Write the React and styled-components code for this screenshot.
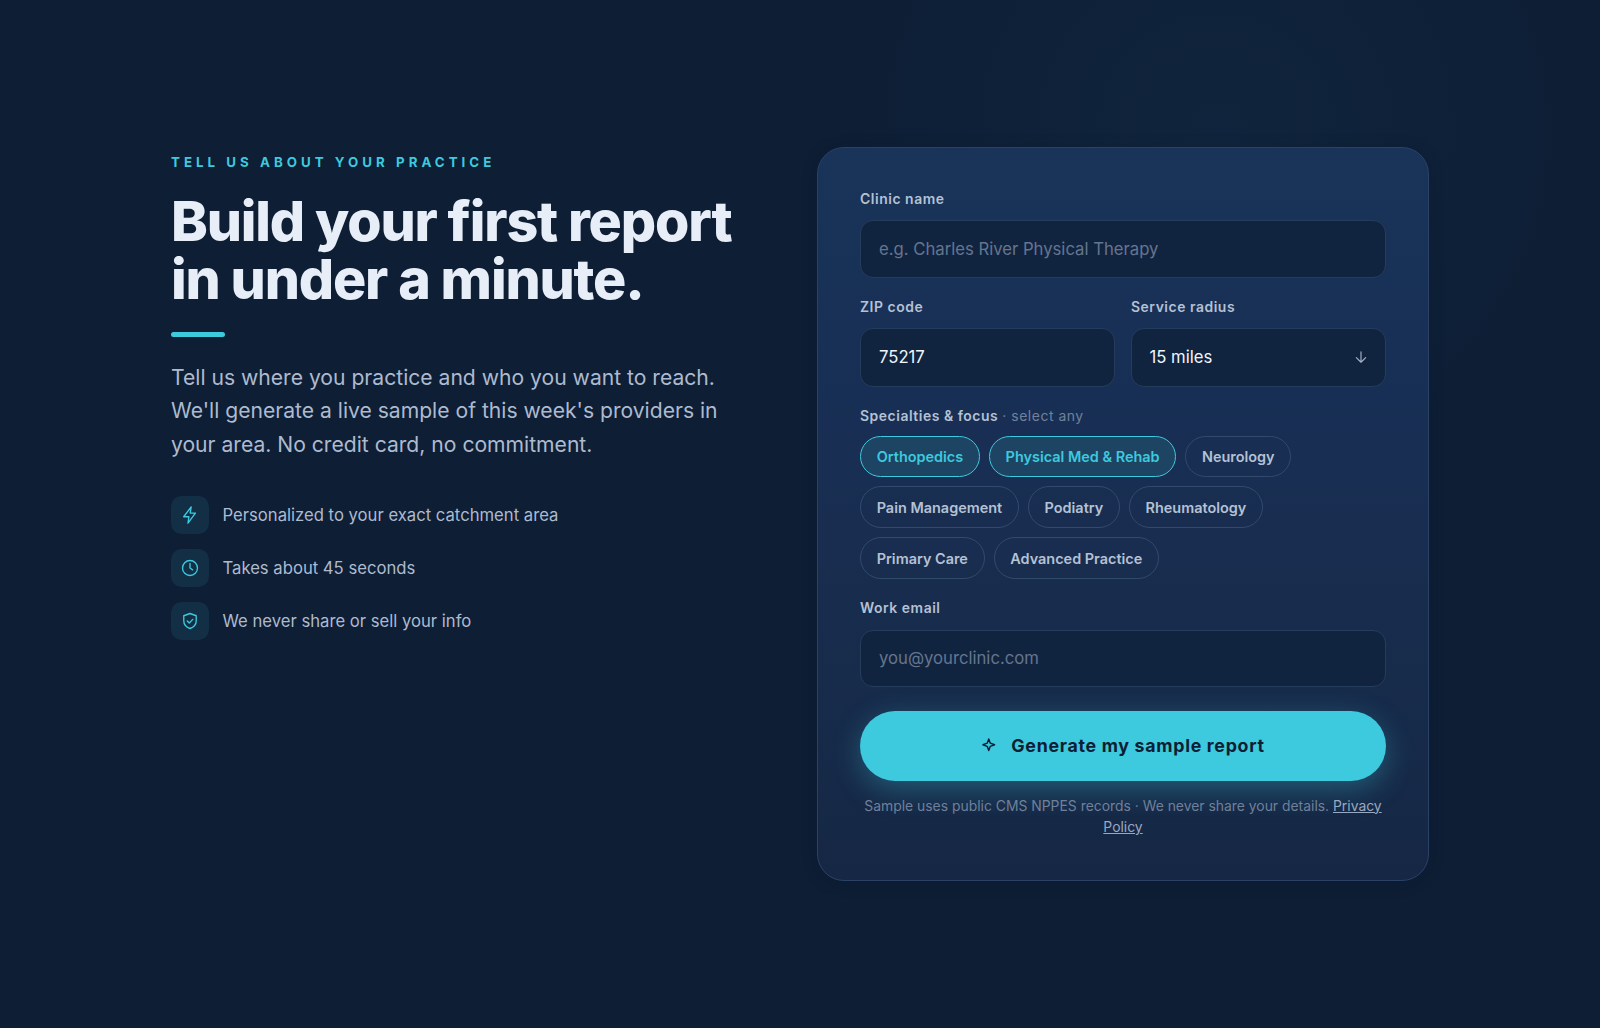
import React from "react";
import styled, { createGlobalStyle } from "styled-components";

const GlobalStyle = createGlobalStyle`
* {
    box-sizing: border-box;
}
body {
    margin: 0;
    background: #0d1e35;
    color: #e8eef8;
    font-family: Inter, "Liberation Sans", sans-serif;
    -webkit-font-smoothing: antialiased;
}
`;

const Section = styled.section`
display: flex;
justify-content: center;
align-items: flex-start;
min-height: 1028px;
padding-top: 147px;
background: radial-gradient(circle at 1217px 130px, rgba(70, 175, 222, 0.042), rgba(61, 190, 222, 0) 370px), #0d1e35;
`;

const Container = styled.div`
display: grid;
grid-template-columns: 582px 612px;
justify-content: space-between;
width: 1258px;
`;

const Intro = styled.div`
padding-top: 7px;
`;

const Eyebrow = styled.div`
color: #3dc9de;
font-size: 13.3px;
font-weight: 700;
line-height: 17px;
letter-spacing: 4.03px;
text-transform: uppercase;
`;

const Title = styled.h1`
margin: 21px 0 0;
font-size: 55.5px;
font-weight: 800;
line-height: 58px;
letter-spacing: -1.18px;
white-space: nowrap;
`;

const Accent = styled.div`
width: 53.5px;
height: 5px;
margin-top: 24px;
border-radius: 3px;
background: #3dc9de;
`;

const Lead = styled.p`
margin: 23.5px 0 0;
color: #aebace;
font-size: 21.12px;
line-height: 33.8px;
white-space: nowrap;
`;

const Features = styled.ul`
display: flex;
flex-direction: column;
gap: 15.5px;
list-style: none;
margin: 34.1px 0 0;
padding: 0;
`;

const Feature = styled.li`
display: flex;
align-items: center;
gap: 14px;
color: #aebace;
font-size: 16.66px;
`;

const FeatureIcon = styled.span`
display: flex;
align-items: center;
justify-content: center;
width: 37.5px;
height: 37.7px;
border-radius: 10.5px;
background: #122f45;
color: #3dc9de;
`;

const Card = styled.form`
display: flex;
flex-direction: column;
height: 734px;
padding: 42px;
border: 1px solid #2a4265;
border-radius: 27px;
background: linear-gradient(180deg, #193359 0%, #182f55 35%, #182d4e 60%, #152744 100%);
box-shadow: 0 2px 20px -4px rgba(4, 12, 28, 0.2);
`;

const Field = styled.div`
display: flex;
flex-direction: column;
margin-bottom: 20.3px;
`;

const FieldRow = styled.div`
display: grid;
grid-template-columns: 1fr 1fr;
gap: 16px;
`;

const Label = styled.label`
margin-bottom: ${props => props.$gap || "10.8px"};
color: #b5c1d4;
font-size: 13.9px;
font-weight: 600;
line-height: 19.5px;
letter-spacing: 0.55px;
`;

const Hint = styled.span`
color: #71819b;
font-weight: 400;
`;

const Input = styled.input`
width: 100%;
height: ${props => props.$height || "57.4px"};
padding: 0 18px;
border: 1px solid #263c5b;
border-radius: 13px;
outline: none;
background: #11243f;
color: #f0f5fc;
font-family: inherit;
font-size: 16.68px;
&::placeholder {
    color: #65758f;
    opacity: 1;
}
`;

const Select = styled.button`
display: flex;
align-items: center;
justify-content: space-between;
width: 100%;
height: 58.3px;
padding: 0 17px 0 17.5px;
border: 1px solid #263c5b;
border-radius: 13px;
background: #11243f;
color: #f0f5fc;
font-family: inherit;
font-size: 16.68px;
svg {
    color: #a3b1c7;
}
`;

const Chips = styled.div`
display: flex;
flex-wrap: wrap;
gap: 9px;
`;

const Chip = styled.button`
height: 41.8px;
padding: 0 15.7px;
border: 1px solid ${props => (props.$active ? "#3dc9de" : "#324a6c")};
border-radius: 21px;
background: ${props => (props.$active ? "#1d4563" : "transparent")};
color: ${props => (props.$active ? "#3dc9de" : "#b5c1d4")};
font-family: inherit;
font-size: 14.45px;
font-weight: 600;
`;

const Submit = styled.button`
display: flex;
align-items: center;
justify-content: center;
gap: 14.5px;
flex: none;
height: 69.3px;
margin-top: 4px;
border: 0;
border-radius: 35px;
background: #3dc9de;
box-shadow: 0 8px 30px rgba(61, 201, 222, 0.33);
color: #0d1e35;
font-family: inherit;
font-size: 17.8px;
font-weight: 700;
letter-spacing: 0.7px;
svg {
    margin-top: -3px;
}
`;

const Note = styled.p`
margin: 15px 0 0;
color: #70809a;
font-size: 13.9px;
line-height: 21.3px;
text-align: center;
a {
    color: #9aa8bf;
    text-decoration: underline;
}
`;

const Svg = ({ size = 18, width = 1.8, children }) => (
    <svg width={size} height={size} viewBox="0 0 24 24" fill="none" stroke="currentColor" strokeWidth={width} strokeLinecap="round" strokeLinejoin="round">
        {children}
    </svg>
);

const features = [
    { text: "Personalized to your exact catchment area", icon: <path d="M13.6 1.2 3.600 14.300h6.900l-1.200 8.500 9.900-13.300h-7z" /> },
    { text: "Takes about 45 seconds", icon: <><circle cx="12" cy="12" r="10" /><path d="M12 6v6l3.500 2.500" /></> },
    { text: "We never share or sell your info", icon: <><path d="M12 2 20.300 5v6.500c0 5.200-3.500 8.700-8.300 10.500-4.800-1.800-8.300-5.300-8.300-10.500V5z" /><path d="m8.300 12 2.700 2.700 4.700-4.900" /></> },
];

const specialties = [
    { name: "Orthopedics", active: true },
    { name: "Physical Med & Rehab", active: true },
    { name: "Neurology" },
    { name: "Pain Management" },
    { name: "Podiatry" },
    { name: "Rheumatology" },
    { name: "Primary Care" },
    { name: "Advanced Practice" },
];

const App = () => {

    return (
        <Section>
            <GlobalStyle />
            <Container>
                <Intro>
                    <Eyebrow>Tell us about your practice</Eyebrow>
                    <Title>Build your first report<br />in under a minute.</Title>
                    <Accent />
                    <Lead>
                        Tell us where you practice and who you want to reach.<br />
                        We'll generate a live sample of this week's providers in<br />
                        your area. No credit card, no commitment.
                    </Lead>
                    <Features>
                        {features.map(item => (
                            <Feature key={item.text}>
                                <FeatureIcon><Svg size={18}>{item.icon}</Svg></FeatureIcon>
                                {item.text}
                            </Feature>
                        ))}
                    </Features>
                </Intro>
                <Card onSubmit={e => e.preventDefault()}>
                    <Field>
                        <Label htmlFor="clinic">Clinic name</Label>
                        <Input id="clinic" placeholder="e.g. Charles River Physical Therapy" />
                    </Field>
                    <FieldRow>
                        <Field>
                            <Label htmlFor="zip">ZIP code</Label>
                            <Input id="zip" $height="58.3px" defaultValue="75217" />
                        </Field>
                        <Field>
                            <Label>Service radius</Label>
                            <Select type="button">
                                15 miles
                                <Svg size={14} width={2}><path d="M12 3v18M4 13l8 8 8-8" /></Svg>
                            </Select>
                        </Field>
                    </FieldRow>
                    <Field>
                        <Label $gap="9.3px">Specialties &amp; focus <Hint>· select any</Hint></Label>
                        <Chips>
                            {specialties.map(item => (
                                <Chip type="button" key={item.name} $active={item.active}>{item.name}</Chip>
                            ))}
                        </Chips>
                    </Field>
                    <Field>
                        <Label htmlFor="email">Work email</Label>
                        <Input id="email" placeholder="you@yourclinic.com" />
                    </Field>
                    <Submit type="submit">
                        <Svg size={15.5} width={2.2}><path d="M12 3l2.400 6.600L21 12l-6.600 2.400L12 21l-2.400-6.600L3 12l6.600-2.400z" /></Svg>
                        Generate my sample report
                    </Submit>
                    <Note>
                        Sample uses public CMS NPPES records · We never share your details. <a href="#privacy">Privacy Policy</a>
                    </Note>
                </Card>
            </Container>
        </Section>
    );
};

export default App;
